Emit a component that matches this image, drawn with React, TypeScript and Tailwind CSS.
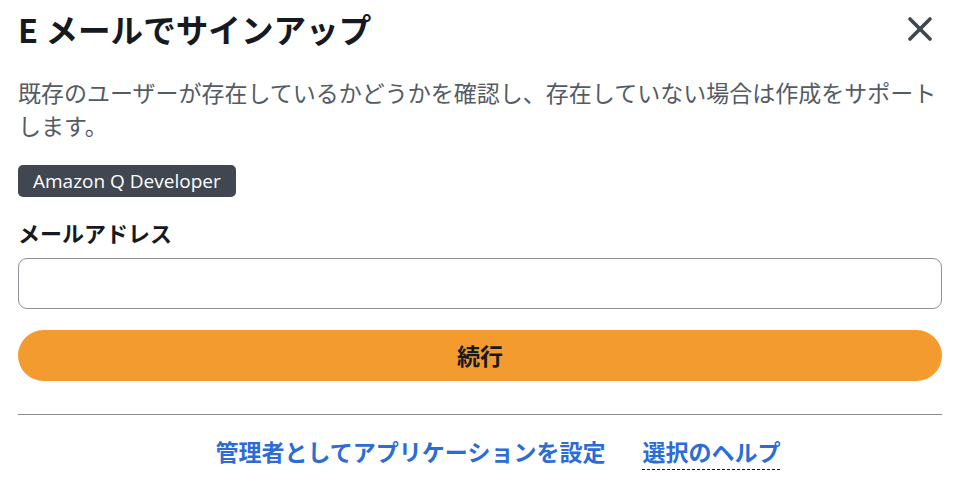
import { X } from "lucide-react";

const jp = "font-['Noto_Sans_CJK_JP','Noto_Sans',sans-serif]";

export default function App() {
  return (
    <div className={`min-h-[494px] w-[962px] bg-white pl-[18px] pr-[20px] pt-[9px] ${jp}`}>
      <div className="flex items-center justify-between">
        <h1 className="text-[32.6px] font-bold leading-[40px] text-[#16191f]">E メールでサインアップ</h1>
        <button type="button" className="mr-[2px] text-[#414750]">
          <X className="h-[40px] w-[40px]" strokeWidth={2.2} />
        </button>
      </div>

      <p className="mt-[27px] text-[23px] leading-[33px] text-[#545b64]">
        既存のユーザーが存在しているかどうかを確認し、存在していない場合は作成をサポートします。
      </p>

      <span className="mt-[23px] inline-flex h-[32px] items-center rounded-[5px] bg-[#414750] px-[15px] font-['Open_Sans',sans-serif] text-[19px] text-white">
        Amazon Q Developer
      </span>

      <label className="mt-[20px] block text-[22px] font-bold leading-[30px] text-[#16191f]">
        メールアドレス
      </label>
      <input
        type="email"
        className="mt-[11px] block h-[51px] w-full rounded-[9px] border border-[#8d9096] px-3 text-[20px] outline-none"
      />

      <button
        type="button"
        className="mt-[21px] flex h-[51px] w-full items-center justify-center rounded-full bg-[#f49b30] text-[23px] font-bold text-[#16191f]"
      >
        続行
      </button>

      <hr className="mt-[33px] border-t border-[#8d8d8d]" />

      <div className="mt-[21px] flex justify-center gap-[37px] pl-[36px] text-[23px] font-bold leading-[30px] text-[#2b6cd6]">
        <a href="#">管理者としてアプリケーションを設定</a>
        <a href="#" className="border-b border-dashed border-[#16191f] pb-[3px]">
          選択のヘルプ
        </a>
      </div>
    </div>
  );
}
